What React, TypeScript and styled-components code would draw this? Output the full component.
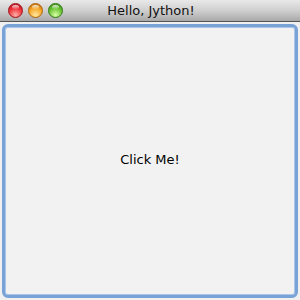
import styled, { createGlobalStyle } from "styled-components";

const Global = createGlobalStyle`
  html, body { margin: 0; padding: 0; }
  body { font-family: "DejaVu Sans", "Liberation Sans", sans-serif; }
`;

const Window = styled.div`
  width: 300px;
  height: 300px;
  display: flex;
  flex-direction: column;
  background: #e8e8e8;
  overflow: hidden;
`;

const TitleBar = styled.div`
  height: 22px;
  flex: none;
  position: relative;
  display: flex;
  align-items: center;
  justify-content: center;
  background: linear-gradient(#e9e9e9, #cfcfcf 50%, #a9a9a9);
  border-bottom: 1px solid #555;
  box-sizing: border-box;
`;

const Lights = styled.div`
  position: absolute;
  left: 8px;
  top: 3px;
  display: flex;
  gap: 5px;
`;

const Light = styled.div<{ $hi: string; $c: string; $d: string }>`
  width: 15px;
  height: 15px;
  border-radius: 50%;
  box-sizing: border-box;
  border: 1px solid ${(p) => p.$d};
  background: radial-gradient(
    circle at 50% 85%,
    ${(p) => p.$hi} 0,
    ${(p) => p.$c} 55%,
    ${(p) => p.$d} 100%
  );
  position: relative;
  &::after {
    content: "";
    position: absolute;
    left: 3px;
    top: 1px;
    width: 7px;
    height: 4px;
    border-radius: 50%;
    background: linear-gradient(rgba(255, 255, 255, 0.8), rgba(255, 255, 255, 0.1));
  }
`;

const Title = styled.div`
  font-size: 13px;
  color: #111;
  margin-left: 2px;
`;

const Content = styled.div`
  flex: 1;
  display: flex;
  padding: 2px;
  background: #f0f0f0;
`;

const Button = styled.button`
  flex: 1;
  border: 3px solid #79a3d6;
  border-radius: 6px;
  box-shadow: inset 0 0 0 1px #a9c6ea;
  background: #f2f2f2;
  font-family: "DejaVu Sans", "Liberation Sans", sans-serif;
  font-size: 13px;
  color: #000;
  padding: 0 0 4px 0;
  margin: 0;
`;

export default function App() {
  return (
    <>
      <Global />
      <Window>
        <TitleBar>
          <Lights>
            <Light $hi="#ffb0a8" $c="#f0323a" $d="#a0101a" />
            <Light $hi="#ffe8a0" $c="#f5a626" $d="#b0620a" />
            <Light $hi="#d8ffa8" $c="#6cc332" $d="#2f7a12" />
          </Lights>
          <Title>Hello, Jython!</Title>
        </TitleBar>
        <Content>
          <Button>Click Me!</Button>
        </Content>
      </Window>
    </>
  );
}
